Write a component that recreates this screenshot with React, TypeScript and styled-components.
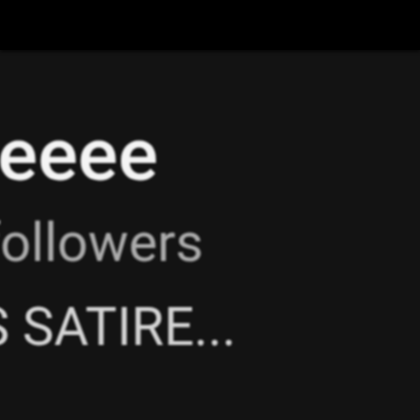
import React from 'react';
import styled, { createGlobalStyle } from 'styled-components';

const GlobalStyle = createGlobalStyle`
  html, body {
    margin: 0;
    padding: 0;
    background: #131313;
    overflow: hidden;
  }
`;

const Page = styled.div`
  width: 420px;
  height: 420px;
  display: flex;
  flex-direction: column;
  background: #131313;
  font-family: Roboto, "Liberation Sans", Arial, sans-serif;
  overflow: hidden;
`;

const TopBar = styled.div`
  height: 50px;
  flex-shrink: 0;
  background: #000;
  box-shadow: 0 2px 3px rgba(0, 0, 0, 0.6);
`;

const Info = styled.div`
  display: flex;
  flex-direction: column;
  padding-top: 62px;
  margin-left: -123px;
  white-space: nowrap;
  filter: blur(1.2px);
`;

const Name = styled.div`
  font-size: 75px;
  line-height: 84px;
  font-weight: 500;
  color: #f4f4f4;
`;

const Followers = styled.div`
  margin-top: 15px;
  font-size: 54px;
  line-height: 64px;
  color: #ababab;
`;

const Bio = styled.div`
  margin-top: 22px;
  font-size: 53px;
  line-height: 60px;
  color: #d4d4d4;
`;

export default function App() {
  return (
    <Page>
      <GlobalStyle />
      <TopBar />
      <Info>
        <Name>eeeeeee</Name>
        <Followers>100 followers</Followers>
        <Bio>BOSS SATIRE...</Bio>
      </Info>
    </Page>
  );
}
